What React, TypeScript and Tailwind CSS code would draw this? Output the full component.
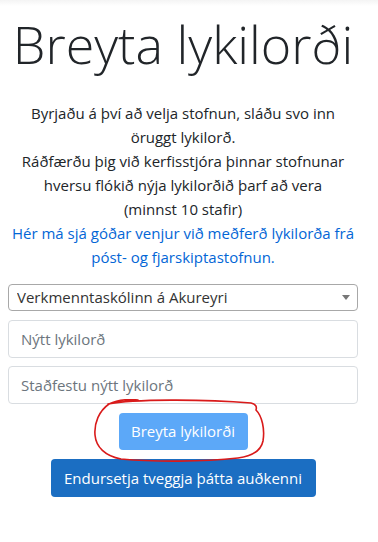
import { useState } from 'react';

const font = "font-['Segoe_UI','Open_Sans','Noto_Sans',sans-serif]";

function RedCircle() {
  // hand-drawn marker ellipse around the submit button
  return (
    <svg
      className="pointer-events-none absolute left-[-26px] top-[-14px]"
      width="178"
      height="66"
      viewBox="0 0 178 66"
      fill="none"
    >
      <path
        d="M15 5 C40 0 110 0 158 4 C163 5 164 8 163 11 C169 17 172 30 170 42 C168 52 160 57 145 59 C110 63 60 63 28 60 C12 57 3 48 2 36 C1 24 6 12 16 5 C24 1 35 0 45 1"
        stroke="#d91a1a"
        strokeWidth="1.6"
        strokeLinecap="round"
      />
    </svg>
  );
}

export default function App() {
  const [inst, setInst] = useState('vma');

  return (
    <div className={`relative h-[542px] w-[378px] overflow-hidden bg-white text-[#212529] ${font}`}>
      <div className="h-[6px] bg-gradient-to-b from-[#f4f4f4] to-white" />
      <div className="w-[366px] px-2 text-center">
        <h1 className="mt-[4px] whitespace-nowrap text-[52px] font-light leading-[67px]">Breyta lykilorði</h1>
        <p className="mt-[24px] text-[15px] leading-6">
          <span className="block whitespace-nowrap">Byrjaðu á því að velja stofnun, sláðu svo inn</span>
          <span className="block whitespace-nowrap">öruggt lykilorð.</span>
          <span className="block whitespace-nowrap">Ráðfærðu þig við kerfisstjóra þinnar stofnunar</span>
          <span className="block whitespace-nowrap">hversu flókið nýja lykilorðið þarf að vera</span>
          <span className="block whitespace-nowrap">(minnst 10 stafir)</span>
          <a href="#" className="block whitespace-nowrap text-[#0366d6]">
            Hér má sjá góðar venjur við meðferð lykilorða frá
            <br />
            póst- og fjarskiptastofnun.
          </a>
        </p>

        <form className="mt-[15px] flex flex-col items-stretch text-left">
          <div className="relative">
            <select
              value={inst}
              onChange={(e) => setInst(e.target.value)}
              className="h-[27px] w-full appearance-none rounded-[4px] border border-[#a8a8a8] bg-white pl-[8px] text-[15px] text-[#333]"
            >
              <option value="vma">Verkmenntaskólinn á Akureyri</option>
            </select>
            <span className="pointer-events-none absolute right-[8px] top-[11px] h-0 w-0 border-x-[4px] border-t-[5px] border-x-transparent border-t-[#777]" />
          </div>
          <input
            type="password"
            placeholder="Nýtt lykilorð"
            className="mt-[9px] h-[38px] rounded-[4px] border border-[#d9dde1] px-3 text-[15px] placeholder:text-[#6c757d]"
          />
          <input
            type="password"
            placeholder="Staðfestu nýtt lykilorð"
            className="mt-[8px] h-[38px] rounded-[4px] border border-[#d9dde1] px-3 text-[15px] placeholder:text-[#6c757d]"
          />
          <div className="mt-[9px] flex justify-center">
            <div className="relative">
              <button
                type="button"
                disabled
                className="h-[37px] w-[129px] rounded-[4px] bg-[#5ca8f8] text-[15px] text-white"
              >
                Breyta lykilorði
              </button>
              <RedCircle />
            </div>
          </div>
          <div className="mt-[9px] flex justify-center">
            <button
              type="button"
              className="h-[38px] w-[265px] rounded-[4px] bg-[#1b6ec2] text-[15px] text-white"
            >
              Endursetja tveggja þátta auðkenni
            </button>
          </div>
        </form>
      </div>
    </div>
  );
}
